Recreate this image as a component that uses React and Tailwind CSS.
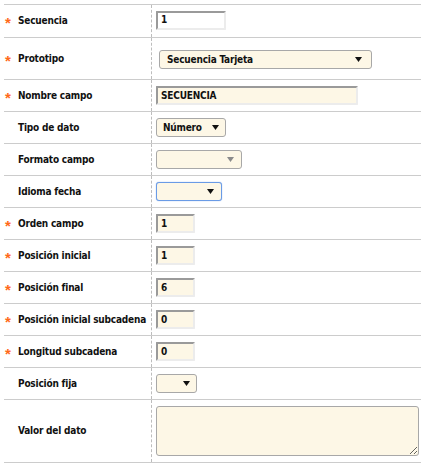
import React from "react";

const font = { fontFamily: '"DejaVu Sans Condensed", "Liberation Sans", Arial, sans-serif' };

function Arrow({ grey }) {
  return (
    <svg width="7" height="5" viewBox="0 0 7 5" className="shrink-0">
      <polygon points="0,0 7,0 3.5,5" fill={grey ? "#8a8a8a" : "#111"} />
    </svg>
  );
}

function TextBox({ value, w, white }) {
  return (
    <div
      className={`h-[19px] ${w} ${white ? "bg-white" : "bg-[#fdf7e6]"} border-2 border-t-[#9a9a9a] border-l-[#9a9a9a] border-b-[#ececec] border-r-[#ececec] rounded-[1px] flex items-center pl-[3px] text-[10px] font-bold text-[#111] leading-none tracking-[-0.2px]`}
    >
      {value}
    </div>
  );
}

function Select({ value, w, pl, pr, grey, focus, extra }) {
  return (
    <div
      className={`h-[19px] ${w} ${extra || ""} bg-[#fdf7e6] border rounded-[3px] ${focus ? "border-[#6a9be6] shadow-[0_0_1px_#6a9be6]" : "border-[#a8a8a8]"} flex items-center justify-between ${pl} ${pr} text-[10px] font-bold text-[#111] leading-none tracking-[-0.2px]`}
    >
      <span>{value}</span>
      <Arrow grey={grey} />
    </div>
  );
}

function Row({ req, label, h, children }) {
  return (
    <div className={`flex ${h} border-b border-[#cccccc]`}>
      <div className="w-[148px] shrink-0 border-r border-dashed border-[#bdbdbd] flex items-center">
        <span
          className="w-[14px] pl-[1px] text-[#ff6a1a] text-[15px] font-bold leading-none self-center mt-[3px]"
          style={{ fontFamily: '"Liberation Sans", Arial, sans-serif' }}
        >
          {req ? "*" : ""}
        </span>
        <span className="text-[10px] font-bold text-[#111] leading-none tracking-[-0.2px] whitespace-nowrap">{label}</span>
      </div>
      <div className="flex-1 flex items-center pl-[4px]">{children}</div>
    </div>
  );
}

export default function App() {
  return (
    <div className="w-[425px] h-[468px] bg-white" style={font}>
      <div className="ml-[4px] mt-[4px] w-[417px] border-t border-[#cccccc]">
        <Row req label="Secuencia" h="h-[33px]">
          <div className="mt-[-2px]">
            <TextBox value="1" w="w-[70px]" white />
          </div>
        </Row>
        <Row req label="Prototipo" h="h-[42px]">
          <Select value="Secuencia Tarjeta" w="w-[213px]" pl="pl-[7px]" pr="pr-[9px]" extra="ml-[3px] mt-[2px]" />
        </Row>
        <Row req label="Nombre campo" h="h-[32px]">
          <TextBox value="SECUENCIA" w="w-[202px]" />
        </Row>
        <Row label="Tipo de dato" h="h-[32px]">
          <Select value="Número" w="w-[70px]" pl="pl-[6px]" pr="pr-[6px]" />
        </Row>
        <Row label="Formato campo" h="h-[32px]">
          <Select value="" w="w-[86px]" pl="pl-[6px]" pr="pr-[7px]" grey />
        </Row>
        <Row label="Idioma fecha" h="h-[32px]">
          <Select value="" w="w-[66px]" pl="pl-[6px]" pr="pr-[7px]" focus />
        </Row>
        <Row req label="Orden campo" h="h-[32px]">
          <TextBox value="1" w="w-[39px]" />
        </Row>
        <Row req label="Posición inicial" h="h-[32px]">
          <TextBox value="1" w="w-[39px]" />
        </Row>
        <Row req label="Posición final" h="h-[32px]">
          <TextBox value="6" w="w-[39px]" />
        </Row>
        <Row req label="Posición inicial subcadena" h="h-[32px]">
          <TextBox value="0" w="w-[39px]" />
        </Row>
        <Row req label="Longitud subcadena" h="h-[32px]">
          <TextBox value="0" w="w-[39px]" />
        </Row>
        <Row label="Posición fija" h="h-[32px]">
          <Select value="" w="w-[41px]" pl="pl-[6px]" pr="pr-[6px]" />
        </Row>
        <Row label="Valor del dato" h="h-[63px]">
          <textarea
            readOnly
            className="block w-[263px] h-[50px] bg-[#fdf7e6] border border-[#a8a8a8] rounded-[3px] outline-none"
          />
        </Row>
      </div>
    </div>
  );
}
